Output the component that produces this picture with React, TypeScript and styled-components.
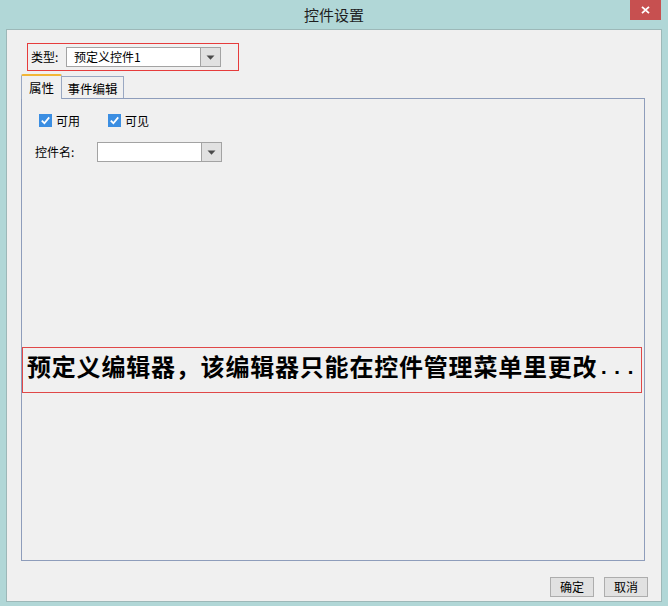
import React from 'react';
import styled, { createGlobalStyle } from 'styled-components';

const Global = createGlobalStyle`
  html, body { margin: 0; padding: 0; }
  body {
    background: #b1d7d7;
    font-family: "Noto Sans CJK SC", "Noto Sans", sans-serif;
    font-size: 12px;
    color: #000;
  }
`;

const Window = styled.div`
  width: 668px;
  height: 606px;
  display: flex;
  flex-direction: column;
  background: #b1d7d7;
  overflow: hidden;
`;

const TitleBar = styled.div`
  height: 29px;
  flex: none;
  display: grid;
  grid-template-columns: 1fr auto 1fr;
`;

const Title = styled.div`
  grid-column: 2;
  align-self: center;
  font-size: 15px;
  line-height: 29px;
  color: #1e1e1e;
`;

const CloseButton = styled.button`
  grid-column: 3;
  justify-self: end;
  align-self: start;
  width: 31px;
  height: 20px;
  margin-right: 7px;
  padding: 0;
  border: none;
  background: #c75050;
  display: flex;
  align-items: center;
  justify-content: center;
`;

const Body = styled.div`
  margin-left: 6px;
  width: 656px;
  height: 573px;
  box-sizing: border-box;
  border: 1px solid #9db8b8;
  background: #f0f0f0;
  display: flex;
  flex-direction: column;
`;

const TypeBox = styled.div`
  margin: 13px 0 0 20px;
  width: 212px;
  height: 28px;
  box-sizing: border-box;
  border: 1px solid #e63c3c;
  display: flex;
  align-items: center;
  padding-left: 3px;
`;

const FieldLabel = styled.span<{ $w: number }>`
  width: ${(p) => p.$w}px;
  flex: none;
  line-height: 14px;
`;

const Combo = styled.div<{ $w: number }>`
  width: ${(p) => p.$w}px;
  height: 20px;
  box-sizing: border-box;
  border: 1px solid #a3a3a3;
  background: #fff;
  display: flex;
  flex: none;
`;

const ComboText = styled.div`
  flex: 1;
  padding-left: 7px;
  line-height: 18px;
  white-space: nowrap;
  overflow: hidden;
`;

const ComboArrow = styled.div`
  width: 19px;
  border-left: 1px solid #a3a3a3;
  background: #e1e1e1;
  display: flex;
  align-items: center;
  justify-content: center;
`;

const TabsRow = styled.div`
  margin: 3px 0 0 14px;
  height: 24px;
  display: flex;
  align-items: flex-end;
`;

const Tab = styled.div<{ $active?: boolean; $w: number }>`
  width: ${(p) => p.$w}px;
  box-sizing: border-box;
  display: flex;
  justify-content: center;
  align-items: center;
  background: #f0f0f0;
  border: 1px solid #9aa8c2;
  border-bottom: none;
  font-size: 12.5px;
  ${(p) =>
    p.$active
      ? `height: 25px; margin-bottom: -1px; position: relative; z-index: 1;
         border-top: 2px solid #f2b636; border-radius: 2px 2px 0 0; padding-bottom: 1px;`
      : `height: 22px; border-left: none; padding-top: 2px;`}
`;

const TabPanel = styled.div`
  margin-left: 14px;
  width: 624px;
  height: 463px;
  flex: none;
  box-sizing: border-box;
  border: 1px solid #8e9dbb;
  display: flex;
  flex-direction: column;
`;

const CheckRow = styled.div`
  margin: 15px 0 0 17px;
  height: 13px;
  display: flex;
  align-items: center;
`;

const CheckItem = styled.label<{ $w?: number }>`
  ${(p) => (p.$w ? `width: ${p.$w}px;` : '')}
  display: flex;
  align-items: center;
  gap: 4px;
  line-height: 13px;
`;

const NameRow = styled.div`
  margin: 15px 0 0 13px;
  height: 20px;
  display: flex;
  align-items: center;
`;

const NoticeBox = styled.div`
  margin-top: 185px;
  width: 620px;
  height: 46px;
  box-sizing: border-box;
  border: 1px solid #e04848;
  display: flex;
  align-items: center;
  padding: 0 0 10px 4px;
  font-family: "Liberation Mono", "Noto Sans CJK SC", monospace;
  font-weight: 700;
  font-size: 24px;
  letter-spacing: 0.8px;
  white-space: nowrap;
  color: #000;
`;

const Dots = styled.span`
  font-size: 21px;
  position: relative;
  top: 3px;
`;

const Footer = styled.div`
  margin-top: 16px;
  padding-right: 13px;
  display: flex;
  justify-content: flex-end;
  gap: 10px;
`;

const Button = styled.button`
  width: 44px;
  height: 20px;
  padding: 0;
  box-sizing: border-box;
  border: 1px solid #adadad;
  background: #e1e1e1;
  font-family: "Noto Sans CJK SC", sans-serif;
  font-size: 12px;
  color: #000;
  line-height: 18px;
`;

const Arrow = () => (
  <svg width="9" height="5" viewBox="0 0 9 5">
    <path d="M0.5 0.5 H8.5 L4.5 4.8 Z" fill="#4a4a4a" />
  </svg>
);

const Check = () => (
  <svg width="13" height="13" viewBox="0 0 13 13">
    <rect width="13" height="13" fill="#3b8ee2" />
    <path d="M2.8 6.6 L5.4 9.2 L10.2 3.4" stroke="#fff" strokeWidth="1.8" fill="none" />
  </svg>
);

export default function App() {
  return (
    <>
      <Global />
      <Window>
        <TitleBar>
          <Title>控件设置</Title>
          <CloseButton aria-label="close">
            <svg width="9" height="8" viewBox="0 0 9 8">
              <path d="M1 0.8 L8 7.2 M8 0.8 L1 7.2" stroke="#fff" strokeWidth="1.8" />
            </svg>
          </CloseButton>
        </TitleBar>
        <Body>
          <TypeBox>
            <FieldLabel $w={35}>类型:</FieldLabel>
            <Combo $w={155}>
              <ComboText>预定义控件1</ComboText>
              <ComboArrow>
                <Arrow />
              </ComboArrow>
            </Combo>
          </TypeBox>
          <TabsRow>
            <Tab $active $w={41}>属性</Tab>
            <Tab $w={62}>事件编辑</Tab>
          </TabsRow>
          <TabPanel>
            <CheckRow>
              <CheckItem $w={69}>
                <Check />
                <span>可用</span>
              </CheckItem>
              <CheckItem>
                <Check />
                <span>可见</span>
              </CheckItem>
            </CheckRow>
            <NameRow>
              <FieldLabel $w={62}>控件名:</FieldLabel>
              <Combo $w={125}>
                <ComboText />
                <ComboArrow>
                  <Arrow />
                </ComboArrow>
              </Combo>
            </NameRow>
            <NoticeBox>
              预定义编辑器，该编辑器只能在控件管理菜单里更改<Dots>...</Dots>
            </NoticeBox>
          </TabPanel>
          <Footer>
            <Button>确定</Button>
            <Button>取消</Button>
          </Footer>
        </Body>
      </Window>
    </>
  );
}
